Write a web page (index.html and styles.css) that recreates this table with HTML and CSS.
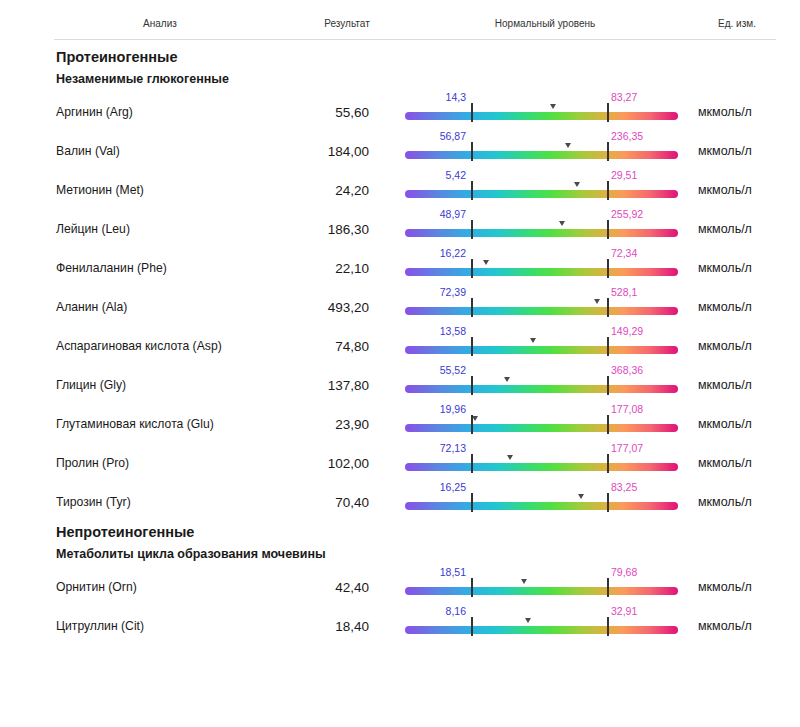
FILE: index.html
```html
<!DOCTYPE html>
<html lang="ru">
<head>
  <meta charset="UTF-8">
  <title>Аминокислоты</title>
  <link rel="stylesheet" href="styles.css">
</head>
<body>
<div class="report">
  <div class="head">
    <span class="h-name">Анализ</span>
    <span class="h-res">Результат</span>
    <span class="h-norm">Нормальный уровень</span>
    <span class="h-unit">Ед. изм.</span>
  </div>

  <h2 class="group first">Протеиногенные</h2>
  <h3 class="sub">Незаменимые глюкогенные</h3>

  <div class="row">
    <span class="name">Аргинин (Arg)</span>
    <span class="res">55,60</span>
    <div class="scale">
      <div class="labels"><span class="lo">14,3</span><span class="hi">83,27</span></div>
      <div class="track"><i class="tick t1"></i><i class="tick t2"></i><i class="mark" style="left:148px"></i><div class="bar"></div></div>
    </div>
    <span class="unit">мкмоль/л</span>
  </div>

  <div class="row">
    <span class="name">Валин (Val)</span>
    <span class="res">184,00</span>
    <div class="scale">
      <div class="labels"><span class="lo">56,87</span><span class="hi">236,35</span></div>
      <div class="track"><i class="tick t1"></i><i class="tick t2"></i><i class="mark" style="left:163px"></i><div class="bar"></div></div>
    </div>
    <span class="unit">мкмоль/л</span>
  </div>

  <div class="row">
    <span class="name">Метионин (Met)</span>
    <span class="res">24,20</span>
    <div class="scale">
      <div class="labels"><span class="lo">5,42</span><span class="hi">29,51</span></div>
      <div class="track"><i class="tick t1"></i><i class="tick t2"></i><i class="mark" style="left:172.7px"></i><div class="bar"></div></div>
    </div>
    <span class="unit">мкмоль/л</span>
  </div>

  <div class="row">
    <span class="name">Лейцин (Leu)</span>
    <span class="res">186,30</span>
    <div class="scale">
      <div class="labels"><span class="lo">48,97</span><span class="hi">255,92</span></div>
      <div class="track"><i class="tick t1"></i><i class="tick t2"></i><i class="mark" style="left:157px"></i><div class="bar"></div></div>
    </div>
    <span class="unit">мкмоль/л</span>
  </div>

  <div class="row">
    <span class="name">Фенилаланин (Phe)</span>
    <span class="res">22,10</span>
    <div class="scale">
      <div class="labels"><span class="lo">16,22</span><span class="hi">72,34</span></div>
      <div class="track"><i class="tick t1"></i><i class="tick t2"></i><i class="mark" style="left:81px"></i><div class="bar"></div></div>
    </div>
    <span class="unit">мкмоль/л</span>
  </div>

  <div class="row">
    <span class="name">Аланин (Ala)</span>
    <span class="res">493,20</span>
    <div class="scale">
      <div class="labels"><span class="lo">72,39</span><span class="hi">528,1</span></div>
      <div class="track"><i class="tick t1"></i><i class="tick t2"></i><i class="mark" style="left:192.3px"></i><div class="bar"></div></div>
    </div>
    <span class="unit">мкмоль/л</span>
  </div>

  <div class="row">
    <span class="name">Аспарагиновая кислота (Asp)</span>
    <span class="res">74,80</span>
    <div class="scale">
      <div class="labels"><span class="lo">13,58</span><span class="hi">149,29</span></div>
      <div class="track"><i class="tick t1"></i><i class="tick t2"></i><i class="mark" style="left:128px"></i><div class="bar"></div></div>
    </div>
    <span class="unit">мкмоль/л</span>
  </div>

  <div class="row">
    <span class="name">Глицин (Gly)</span>
    <span class="res">137,80</span>
    <div class="scale">
      <div class="labels"><span class="lo">55,52</span><span class="hi">368,36</span></div>
      <div class="track"><i class="tick t1"></i><i class="tick t2"></i><i class="mark" style="left:102.5px"></i><div class="bar"></div></div>
    </div>
    <span class="unit">мкмоль/л</span>
  </div>

  <div class="row">
    <span class="name">Глутаминовая кислота (Glu)</span>
    <span class="res">23,90</span>
    <div class="scale">
      <div class="labels"><span class="lo">19,96</span><span class="hi">177,08</span></div>
      <div class="track"><i class="tick t1"></i><i class="tick t2"></i><i class="mark" style="left:70.5px"></i><div class="bar"></div></div>
    </div>
    <span class="unit">мкмоль/л</span>
  </div>

  <div class="row">
    <span class="name">Пролин (Pro)</span>
    <span class="res">102,00</span>
    <div class="scale">
      <div class="labels"><span class="lo">72,13</span><span class="hi">177,07</span></div>
      <div class="track"><i class="tick t1"></i><i class="tick t2"></i><i class="mark" style="left:105.4px"></i><div class="bar"></div></div>
    </div>
    <span class="unit">мкмоль/л</span>
  </div>

  <div class="row">
    <span class="name">Тирозин (Tyr)</span>
    <span class="res">70,40</span>
    <div class="scale">
      <div class="labels"><span class="lo">16,25</span><span class="hi">83,25</span></div>
      <div class="track"><i class="tick t1"></i><i class="tick t2"></i><i class="mark" style="left:176.6px"></i><div class="bar"></div></div>
    </div>
    <span class="unit">мкмоль/л</span>
  </div>

  <h2 class="group">Непротеиногенные</h2>
  <h3 class="sub">Метаболиты цикла образования мочевины</h3>

  <div class="row">
    <span class="name">Орнитин (Orn)</span>
    <span class="res">42,40</span>
    <div class="scale">
      <div class="labels"><span class="lo">18,51</span><span class="hi">79,68</span></div>
      <div class="track"><i class="tick t1"></i><i class="tick t2"></i><i class="mark" style="left:119.8px"></i><div class="bar"></div></div>
    </div>
    <span class="unit">мкмоль/л</span>
  </div>

  <div class="row">
    <span class="name">Цитруллин (Cit)</span>
    <span class="res">18,40</span>
    <div class="scale">
      <div class="labels"><span class="lo">8,16</span><span class="hi">32,91</span></div>
      <div class="track"><i class="tick t1"></i><i class="tick t2"></i><i class="mark" style="left:123px"></i><div class="bar"></div></div>
    </div>
    <span class="unit">мкмоль/л</span>
  </div>
</div>
</body>
</html>
```

FILE: styles.css
```css
body {
    margin: 0;
    background: #fff;
    color: #1a1a1a;
    font-family: "Liberation Sans", Arial, sans-serif;
}

.report {
    width: 722px;
    margin-left: 54px;
}

.head {
    display: grid;
    grid-template-columns: 212px 162px 234px 150px;
    height: 40px;
    padding-top: 18px;
    box-sizing: border-box;
    border-bottom: 1px solid #dcdcdc;
    font-size: 10px;
    line-height: 12px;
    color: #333;
    text-align: center;
}

.group {
    margin: 3px 0 0;
    padding-left: 2px;
    font-size: 14.5px;
    line-height: 18px;
    font-weight: bold;
}

.group.first {
    margin-top: 8px;
}

.sub {
    margin: 5.5px 0 0;
    padding-left: 2px;
    font-size: 12.5px;
    line-height: 15px;
    font-weight: bold;
}

.sub + .row {
    margin-top: 4.5px;
}

.row {
    display: grid;
    grid-template-columns: 252px 63px 309px 1fr;
    align-items: center;
    height: 39px;
}

.name,
.res,
.unit {
    padding-top: 3px;
}

.name {
    padding-left: 2px;
    font-size: 12.2px;
    white-space: nowrap;
}

.res {
    text-align: right;
    font-size: 13.5px;
}

.unit {
    padding-left: 20px;
    font-size: 12.5px;
}

.scale {
    align-self: start;
    padding-left: 36px;
}

.labels {
    display: flex;
    height: 13px;
    font-size: 10.5px;
    line-height: 13px;
}

.lo {
    width: 61px;
    text-align: right;
    color: #3a3ad2;
}

.hi {
    margin-left: 145px;
    color: #e048c0;
}

.track {
    position: relative;
    width: 273px;
    height: 18px;
}

.bar {
    position: absolute;
    left: 0;
    right: 0;
    top: 8px;
    height: 8px;
    border-radius: 4px;
    background: linear-gradient(to right, #8a50e6 0%, #5a86e2 12%, #2fb0e2 24%, #22c8cc 34%, #38dc70 46%, #52e040 54%, #a0cc3c 64%, #e0b040 74%, #fb9a5a 80%, #f46670 90%, #e0127a 100%);
}

.tick {
    position: absolute;
    top: -1px;
    width: 2px;
    height: 19px;
    background: #333;
    z-index: 1;
}

.t1 {
    left: 66px;
}

.t2 {
    left: 202px;
}

.mark {
    position: absolute;
    top: 0;
    width: 0;
    height: 0;
    margin-left: -3.5px;
    border-left: 3.5px solid transparent;
    border-right: 3.5px solid transparent;
    border-top: 5px solid #4a4a4a;
}
```
